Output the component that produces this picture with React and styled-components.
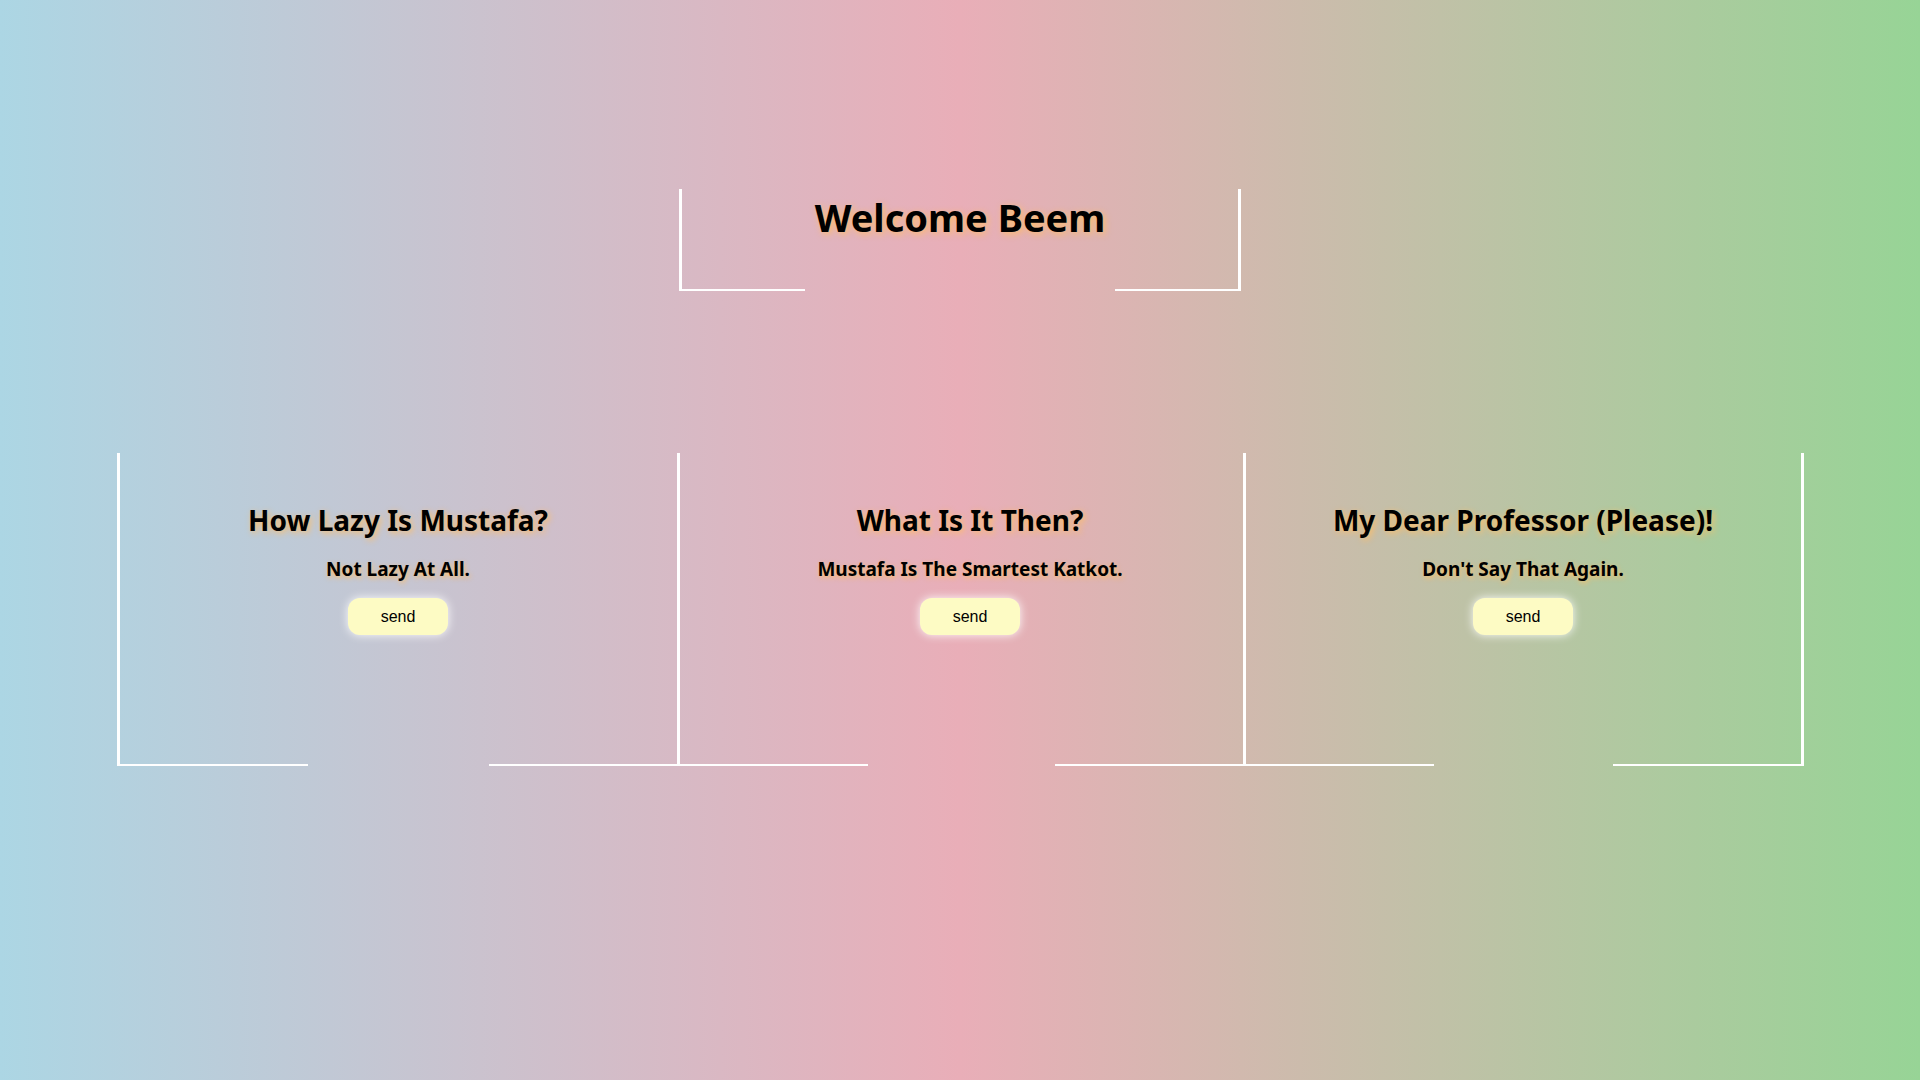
import React from 'react'
import styled, {createGlobalStyle, css} from 'styled-components'

const GlobalStyle = createGlobalStyle`
  html, body {
    margin: 0;
    padding: 0;
  }
  body {
    font-family: "Noto Sans", "Open Sans", sans-serif;
  }
`

const Page = styled.div`
  min-height: 100vh;
  box-sizing: border-box;
  padding-top: 189px;
  background: linear-gradient(to right, #acd6e4 0%, #e9aeb8 50%, #97d496 100%);
`

// white corner brackets: left+bottom and right+bottom, open in the middle
const corners = (w) => css`
  position: relative;
  &::before,
  &::after {
    content: '';
    position: absolute;
    top: 0;
    bottom: 0;
    width: ${w};
    border-bottom: 2px solid #fff;
    pointer-events: none;
  }
  &::before {
    left: 0;
    border-left: 3px solid #fff;
  }
  &::after {
    right: 0;
    border-right: 3px solid #fff;
  }
`

const HeaderBox = styled.header`
  ${corners('123px')}
  width: 562px;
  height: 102px;
  margin: 0 auto;
  padding-top: 3px;
  box-sizing: border-box;
  text-align: center;
`

const Title = styled.h1`
  margin: 0;
  font-size: 38px;
  line-height: 50px;
  font-weight: 700;
  color: #000;
  text-shadow: 2px 2px 7px rgba(255, 190, 100, 0.95);
`

const CardRow = styled.main`
  display: flex;
  justify-content: center;
  margin-top: 162px;
`

const Card = styled.section`
  ${corners('188px')}
  width: ${(p) => p.$w}px;
  height: 313px;
  box-sizing: border-box;
  padding: 50px 0 0 ${(p) => p.$shift || 0}px;
  display: flex;
  flex-direction: column;
  align-items: center;
  & + & {
    margin-left: -3px;
  }
`

const CardTitle = styled.h2`
  margin: 0;
  font-size: 28px;
  line-height: 34px;
  font-weight: 700;
  color: #000;
  text-shadow: 2px 2px 6px rgba(255, 190, 100, 0.95);
`

const CardText = styled.h3`
  margin: 20px 0 0;
  font-size: 19px;
  line-height: 24px;
  font-weight: 700;
  color: #000;
  text-shadow: 1px 2px 5px rgba(255, 190, 100, 0.95);
`

const SendButton = styled.button`
  margin-top: 17px;
  width: 100px;
  height: 37px;
  border: none;
  border-radius: 12px;
  background: #fdfbc4;
  box-shadow: 0 0 10px rgba(255, 255, 255, 0.95);
  font-family: "Liberation Sans", Arial, sans-serif;
  font-size: 16px;
  color: #000;
  cursor: pointer;
`

const cards = [
  {title: 'How Lazy Is Mustafa?', text: 'Not Lazy At All.', w: 563},
  {title: 'What Is It Then?', text: 'Mustafa Is The Smartest Katkot.', w: 569, shift: 18},
  {title: 'My Dear Professor (Please)!', text: "Don't Say That Again.", w: 561},
]

const App = () => {
  return (
    <Page>
      <GlobalStyle />
      <HeaderBox>
        <Title>Welcome Beem</Title>
      </HeaderBox>
      <CardRow>
        {cards.map((c) => (
          <Card key={c.title} $w={c.w} $shift={c.shift}>
            <CardTitle>{c.title}</CardTitle>
            <CardText>{c.text}</CardText>
            <SendButton>send</SendButton>
          </Card>
        ))}
      </CardRow>
    </Page>
  )
}

export default App
